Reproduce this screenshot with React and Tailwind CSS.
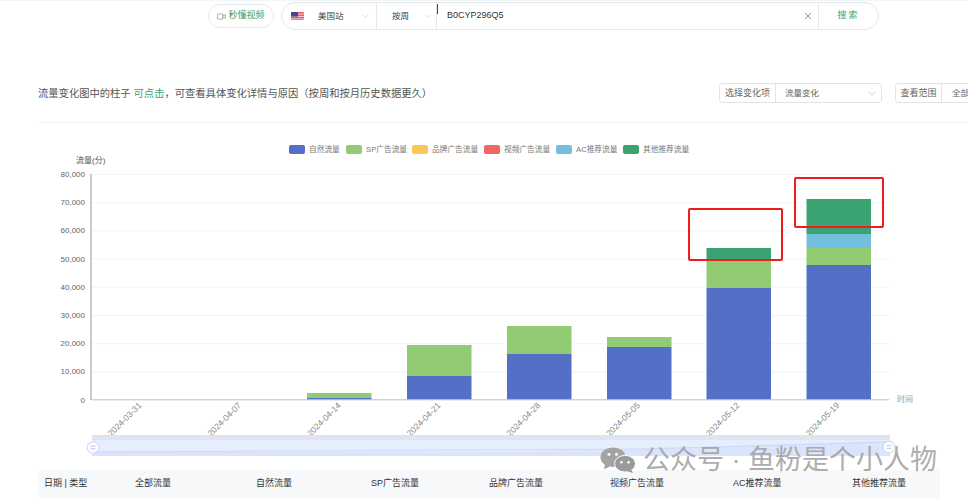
const FONT = '"Liberation Sans","Noto Sans CJK SC",sans-serif';
const C = { blue: '#5470c6', green: '#91cc75', yellow: '#fac858', red: '#ee6666', sky: '#73c0de', dark: '#3ba272' };

const legend = [
  ['自然流量', C.blue, 'w-[57px]'],
  ['SP广告流量', C.green, 'w-[66px]'],
  ['品牌广告流量', C.yellow, 'w-[72px]'],
  ['视频广告流量', C.red, 'w-[72px]'],
  ['AC推荐流量', C.sky, 'w-[67px]'],
  ['其他推荐流量', C.dark, 'w-[67px]'],
];
const ticks = ['80,000', '70,000', '60,000', '50,000', '40,000', '30,000', '20,000', '10,000', '0'];
const dates = ['2024-03-31', '2024-04-07', '2024-04-14', '2024-04-21', '2024-04-28', '2024-05-05', '2024-05-12', '2024-05-19'];
const bars = [
  { x: 307, parts: [[398, 399.5, C.blue], [393, 398, C.green]] },
  { x: 407, parts: [[376, 399.5, C.blue], [345, 376, C.green]] },
  { x: 507, parts: [[354, 399.5, C.blue], [326, 354, C.green]] },
  { x: 607, parts: [[347, 399.5, C.blue], [337, 347, C.green]] },
  { x: 706.5, parts: [[288, 399.5, C.blue], [259, 288, C.green], [248, 259, C.dark]] },
  { x: 806.5, parts: [[265, 399.5, C.blue], [247, 265, C.green], [234, 247, C.sky], [199, 234, C.dark]] },
];
const cols = [
  ['日期 | 类型', 'w-[91px]'],
  ['全部流量', 'w-[121px]'],
  ['自然流量', 'w-[115px]'],
  ['SP广告流量', 'w-[118px]'],
  ['品牌广告流量', 'w-[121px]'],
  ['视频广告流量', 'w-[123px]'],
  ['AC推荐流量', 'w-[119px]'],
  ['其他推荐流量', 'w-[80px]'],
];

function Chevron({ className }) {
  return (
    <svg viewBox="0 0 10 6" className={className} fill="none" stroke="#b9bcc2" strokeWidth="0.8">
      <path d="M1 1l4 4 4-4" />
    </svg>
  );
}

function Flag() {
  return (
    <svg viewBox="0 0 13 8" className="w-[13px] h-[8px] rounded-[1px]">
      <rect width="13" height="8" fill="#ee5a64" />
      <rect y="1.6" width="13" height="1" fill="#f7c9cc" />
      <rect y="4" width="13" height="1" fill="#f7c9cc" />
      <rect y="6.4" width="13" height="1" fill="#f7c9cc" />
      <rect width="7" height="4.6" fill="#3c4a8f" />
    </svg>
  );
}

function SearchBar() {
  return (
    <div className="flex items-start h-[29px] pt-px pl-[208px] border-t border-[#eef8f8]">
      <div className="mt-[2px] w-[66px] h-[24px] rounded-full border border-[#e6e8ec] flex items-center justify-center gap-[2px] text-[9px] text-[#3ba272]">
        <svg viewBox="0 0 10 8" className="w-[9px] h-[7px]" fill="none" stroke="#7a9a8c" strokeWidth="0.8">
          <rect x="0.5" y="1" width="6" height="6" rx="0.6" />
          <path d="M6.5 3.2l3-1.2v4l-3-1.2" />
        </svg>
        秒懂视频
      </div>
      <div className="ml-[7px] w-[598px] h-[28px] rounded-full border border-[#e6e8ec] flex items-center text-[8.5px] text-[#444]">
        <div className="w-[95px] h-full flex items-center pl-[9px] border-r border-[#e8e8e8]">
          <Flag />
          <span className="ml-[14px] w-[44px]">美国站</span>
          <Chevron className="w-[7px] h-[4px]" />
        </div>
        <div className="w-[60px] h-full flex items-center pl-[15px] border-r border-[#e8e8e8]">
          <span className="w-[32px]">按周</span>
          <Chevron className="w-[7px] h-[4px]" />
        </div>
        <div className="flex-1 h-full flex items-center pl-[10px] relative text-[9px] text-[#333]">
          <span className="absolute left-0 top-[1px] h-[10px] w-px bg-[#444]" />
          B0CYP296Q5
          <svg viewBox="0 0 8 8" className="w-[8px] h-[8px] ml-auto mr-[6px]" stroke="#777" strokeWidth="0.8">
            <path d="M1 1l6 6M7 1l-6 6" />
          </svg>
        </div>
        <div className="w-[60px] h-full flex items-center justify-center border-l border-[#e8e8e8] text-[9px] tracking-[2px] text-[#3ba272]">
          搜索
        </div>
      </div>
    </div>
  );
}

function Picker({ label, value, width, labelWidth, valueClass, arrow }) {
  return (
    <div className={`h-[20px] rounded-[3px] border border-[#e2e4e8] flex items-center text-[8.5px] text-[#666] shrink-0 ${width}`}>
      <span className={`h-full flex items-center justify-center border-r border-[#e2e4e8] shrink-0 text-[9px] pt-[2px] ${labelWidth}`}>{label}</span>
      <span className={`whitespace-nowrap ${valueClass}`}>{value}</span>
      {arrow && <Chevron className="w-[8px] h-[5px] ml-auto mr-[5px]" />}
    </div>
  );
}

function Chart() {
  return (
    <svg width="968" height="316" viewBox="0 156 968 316" className="block" style={{ fontFamily: FONT }}>
      <text x="76" y="163" fontSize="8" fill="#555">流量(分)</text>
      {ticks.map((t, i) => {
        const y = 174.5 + i * 28.2;
        return (
          <g key={t}>
            {i < 8 && <line x1="91" x2="889" y1={y} y2={y} stroke="#eff0f6" strokeWidth="0.8" />}
            <text x="85" y={y + 2.5} fontSize="8" fill="#666" textAnchor="end">{t}</text>
          </g>
        );
      })}
      {bars.map((b) =>
        b.parts.map(([top, bottom, fill]) => (
          <rect key={b.x + fill} x={b.x} y={top} width="64.5" height={bottom - top} fill={fill} />
        ))
      )}
      <line x1="91" x2="91" y1="174" y2="400" stroke="#8d8d8d" strokeWidth="0.9" />
      <line x1="91" x2="889" y1="399.8" y2="399.8" stroke="#b8b8b8" strokeWidth="0.9" />
      <text x="897" y="401.5" fontSize="8" fill="#999">时间</text>
      {dates.map((d, i) => (
        <text
          key={d}
          x={142 + i * 99.7}
          y="406"
          fontSize="8.5"
          fill="#888"
          textAnchor="end"
          transform={`rotate(-45 ${142 + i * 99.7} 406)`}
        >
          {d}
        </text>
      ))}
      <rect x="92" y="435" width="798" height="21" fill="#e6edfc" />
      <rect x="92" y="435" width="798" height="5" fill="#dfe4f2" />
      <path d="M92 452 L490 452 L640 449 L890 441 L890 456 L92 456 Z" fill="#d5e1fb" opacity="0.75" />
      <path d="M92 452 L490 450 L640 449 L890 442" fill="none" stroke="#c6d5f7" strokeWidth="0.8" />
      {[[93, 447.5], [889, 447]].map(([x, y]) => (
        <g key={x}>
          <circle cx={x} cy={y} r="5.8" fill="#fff" stroke="#d3dcf3" strokeWidth="1.2" />
          <path d={`M${x - 2.5} ${y - 1.3}h5M${x - 2.5} ${y + 1.3}h5`} stroke="#b9c7ea" strokeWidth="1" />
        </g>
      ))}
    </svg>
  );
}

export default function App() {
  return (
    <div className="relative w-[968px] h-[498px] overflow-hidden bg-white" style={{ fontFamily: FONT }}>
      <SearchBar />
      <div className="mt-[53px] pl-[38px] flex items-center h-[22px]">
        <p className="w-[681px] shrink-0 text-[10.3px] text-[#555] whitespace-nowrap pt-[2px]">
          流量变化图中的柱子 <span className="text-[#3ba272]">可点击</span>，可查看具体变化详情与原因（按周和按月历史数据更久）
        </p>
        <Picker label="选择变化项" value="流量变化" width="w-[163px]" labelWidth="w-[56px]" valueClass="pl-[9px]" arrow />
        <div className="w-[13px] shrink-0" />
        <Picker label="查看范围" value="全部" width="w-[100px]" labelWidth="w-[46px]" valueClass="pl-[10px]" />
      </div>
      <div className="mt-[18px] ml-[38px] h-px bg-[#f0f0f0]" />
      <div className="mt-[21px] pl-[289px] flex items-center h-[12px]">
        {legend.map(([name, color, w]) => (
          <div key={name} className={`flex items-center gap-[4px] text-[7.7px] text-[#777] whitespace-nowrap shrink-0 ${w}`}>
            <span className="w-[16px] h-[9px] rounded-[2px] shrink-0" style={{ backgroundColor: color }} />
            {name}
          </div>
        ))}
      </div>
      <Chart />
      <div className="ml-[38px] w-[902px] h-[28px] -mt-[2px] bg-[#f7f8fa] flex items-center pl-[6px] text-[9px] text-[#333]">
        {cols.map(([name, w]) => (
          <span key={name} className={`shrink-0 whitespace-nowrap ${w}`}>{name}</span>
        ))}
      </div>
      <div className="absolute left-[600px] top-[440px] flex items-center text-[27px] text-[#a2a2a2]/90 whitespace-nowrap">
        <svg viewBox="0 0 36 28" className="w-[36px] h-[26px] mr-[7px]" preserveAspectRatio="none">
          <ellipse cx="13" cy="11" rx="12.5" ry="10.5" fill="#a3a3a3" />
          <path d="M5 18l-1 6 6-3z" fill="#a3a3a3" />
          <ellipse cx="25" cy="18" rx="10.5" ry="9" fill="#9a9a9a" stroke="#fff" strokeWidth="1" />
          <path d="M31 24l2 4-6-2z" fill="#9a9a9a" />
          <circle cx="9" cy="8" r="1.5" fill="#fff" />
          <circle cx="16.5" cy="8" r="1.5" fill="#fff" />
          <circle cx="21.5" cy="16.5" r="1.3" fill="#fff" />
          <circle cx="28.5" cy="16.5" r="1.3" fill="#fff" />
        </svg>
        公众号 · 鱼粉是个小人物
      </div>
      <div className="absolute left-[688px] top-[208px] w-[95px] h-[53px] border-2 border-[#f01c1c] rounded-[2px]" />
      <div className="absolute left-[794px] top-[177px] w-[90px] h-[51px] border-2 border-[#f01c1c] rounded-[2px]" />
    </div>
  );
}
